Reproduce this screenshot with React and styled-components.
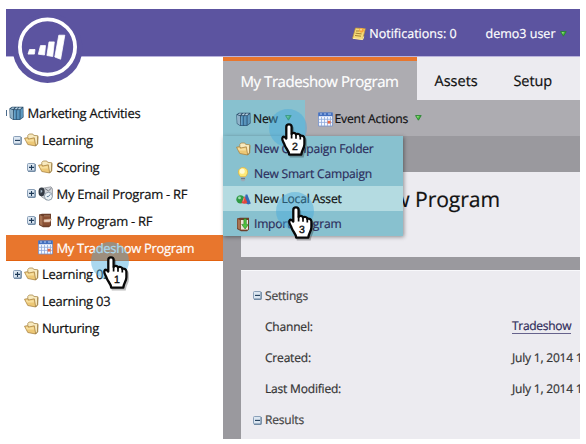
import React from "react";
import styled, { createGlobalStyle } from "styled-components";

const Global = createGlobalStyle`
  * { box-sizing: border-box; }
  body { margin: 0; background: #fff; font-family: "Open Sans", "Noto Sans", sans-serif; overflow: hidden; text-rendering: geometricPrecision; }
  svg { display: block; flex: none; }
`;

const Shell = styled.div`
  position: relative;
  width: 574px;
  height: 430px;
  margin: 9px 6px 5px;
  overflow: hidden;
  display: flex;
  flex-direction: column;
`;
const Header = styled.header`
  flex: none;
  height: 48px;
  padding: 2px 13.5px 0 0;
  background: #5c54a0;
  border-bottom: 1px solid #b9b3dc;
  display: flex;
  align-items: center;
  justify-content: flex-end;
  color: #fff;
`;
const Label = styled.span`
  font-size: ${(p) => p.$size || 13}px;
  letter-spacing: ${(p) => p.$track || 0}px;
  color: ${(p) => p.$color || "inherit"};
  line-height: 20px;
  white-space: nowrap;
  -webkit-text-stroke: 0.2px;
`;
const HeaderItem = styled.div`
  display: flex;
  align-items: center;
  gap: ${(p) => p.$gap || 3}px;
  margin-right: ${(p) => p.$after || 0}px;
`;
const Logo = styled.div`
  position: absolute;
  left: 6px;
  top: 3px;
`;
const Body = styled.div`
  flex: 1;
  display: flex;
  min-height: 0;
`;
const Tree = styled.nav`
  width: 217px;
  padding-top: 43.4px;
  overflow: hidden;
`;
const TreeRow = styled.div`
  height: 26.85px;
  display: flex;
  align-items: center;
  padding: 0 0 0 ${(p) => p.$indent}px;
  background: ${(p) => (p.$active ? "#e8762d" : "transparent")};
  border-bottom: 1px solid ${(p) => (p.$active ? "#e2620f" : "transparent")};
  color: ${(p) => (p.$active ? "#fff" : "#111")};
`;
const Toggle = styled.span`
  width: ${(p) => p.$width || 11}px;
  flex: none;
  display: flex;
`;
const Sliver = styled.span`
  width: 1px;
  height: 6px;
  margin-right: 2px;
  background: #4d6c8c;
`;
const IconSlot = styled.span`
  width: ${(p) => p.$width || 18}px;
  flex: none;
  display: flex;
`;
const Main = styled.main`
  width: 357px;
  display: flex;
  flex-direction: column;
  background: #9a999e;
`;
const Tabs = styled.div`
  flex: none;
  height: 43px;
  display: flex;
  background: #ecebf0;
`;
const Tab = styled.div`
  width: ${(p) => p.$width}px;
  padding: ${(p) => (p.$active ? "3px" : "7px")} 0 0 17.5px;
  display: flex;
  align-items: center;
  background: ${(p) => (p.$active ? "#adacb1" : "transparent")};
  border-top: ${(p) => (p.$active ? "4px solid #e8762d" : "none")};
  color: ${(p) => (p.$active ? "#fff" : "#111")};
`;
const Toolbar = styled.div`
  flex: none;
  height: 36px;
  display: flex;
  background: #adacb1;
  color: #111;
`;
const Tool = styled.div`
  width: ${(p) => p.$width}px;
  padding: 2px 0 0 13px;
  display: flex;
  align-items: center;
  background: ${(p) => (p.$open ? "#88c1cf" : "transparent")};
`;
const Drop = styled.span`
  margin-left: 7px;
  padding-bottom: 2px;
`;
const Content = styled.div`
  flex: 1;
  padding: 36px 0 0 18px;
  display: flex;
  flex-direction: column;
  gap: 13px;
`;
const TitlePanel = styled.section`
  height: 85px;
  padding-top: 13px;
  padding-right: 80px;
  display: flex;
  justify-content: flex-end;
  background: #ecebf0;
`;
const Title = styled.h1`
  margin: 0;
  font-size: 21.2px;
  line-height: 30px;
  font-weight: 400;
  letter-spacing: -0.1px;
  white-space: nowrap;
  color: #111;
  -webkit-text-stroke: 0.2px;
`;
const Details = styled.section`
  flex: 1;
  padding-top: 9px;
  background: #ecebf0;
  border-top: 1px solid #f8f8fb;
  overflow: hidden;
`;
const DetailRow = styled.div`
  height: 31.2px;
  display: flex;
  align-items: center;
  padding-left: 12px;
`;
const Name = styled.div`
  width: 247px;
  flex: none;
  display: flex;
`;
const Link = styled.a`
  font-size: 12px;
  line-height: 14px;
  color: #2c2958;
  border-bottom: 1px solid #66628c;
  letter-spacing: -0.3px;
  -webkit-text-stroke: 0.2px;
`;
const Menu = styled.div`
  position: absolute;
  left: 217px;
  top: 127px;
  width: 180px;
  background: #88c1cf;
  box-shadow: 1px 1px 4px rgba(0, 0, 0, 0.4);
`;
const MenuItem = styled.div`
  height: 25px;
  padding: 1px 0 0 13px;
  display: flex;
  align-items: center;
  color: ${(p) => (p.$hover ? "#111" : "#2c2d5c")};
  background: ${(p) => (p.$hover ? "#b4dbe1" : "transparent")};
`;
const Pointer = styled.div`
  position: absolute;
  left: ${(p) => p.$x}px;
  top: ${(p) => p.$y}px;
`;

const LogoMark = () => (
  <svg width="72" height="72" viewBox="0 0 72 72">
    <circle cx="35.5" cy="36" r="35" fill="#5c54a0" />
    <circle cx="35.5" cy="35" r="27.6" fill="none" stroke="#fff" strokeWidth="3.8" />
    <path d="M17.5 37.5h5.5l-.6 4.6h-6.4zM28.5 33.6h5L32.5 43l-6.2-.8zM37 29.9h5.3l-1.6 14.6-5.8-1zM46.8 23.2h6l-4.2 24-5.8-2.2z" fill="#fff" stroke="#fff" strokeWidth=".8" strokeLinejoin="round" />
  </svg>
);
const Box = ({ plus }) => (
  <svg width="9" height="9" viewBox="0 0 9 9">
    <rect x=".5" y=".5" width="7.5" height="7.5" rx="1" fill="#dbe6f1" stroke="#8ba0b8" />
    <path d="M8.2 1v7.3H1" fill="none" stroke="#557391" strokeWidth=".9" />
    <path d={plus ? "M2 4.4h5M4.5 2v5" : "M2 4.4h5"} stroke="#1e3a58" strokeWidth="1.1" />
  </svg>
);
const Folder = () => (
  <svg width="15" height="14" viewBox="0 0 15 14">
    <path d="M3.8 5V2.4L5.2 1h3.6l.9 1.4 4 .3-.3 8.3-2 2z" fill="#f8eabf" stroke="#a98a4c" strokeWidth=".8" strokeLinejoin="round" />
    <path d="M.5 5.2l3-.5 1 1.4 5.8-1.3 1.4 8.2-7.9-1.5z" fill="#edc876" stroke="#a98444" strokeWidth=".8" strokeLinejoin="round" />
    <path d="M1.8 6l1.4-.2 1 1.3 5.3-1.1.5 2.4-7.2.2z" fill="#f7df9f" />
    <path d="M11.7 13l2-2.2.3-7.5" fill="none" stroke="#98793c" strokeWidth=".8" />
  </svg>
);
const Books = () => (
  <svg width="15" height="15" viewBox="0 0 15 15">
    <path d="M.4 2.6L3 .8h11.4l.2 10.4L11 14H4.2L.8 11.8z" fill="#2c4f6c" />
    <path d="M.9 3.1l3.2.9.2 9.4-3-2z" fill="#8fb2c9" />
    <path d="M5 4h2.4v9.4H5z" fill="#4d8cb8" />
    <path d="M8.2 4h2.5v9.4H8.2z" fill="#4d8cb8" />
    <path d="M11.5 3.7l2.4-1.8v9.1l-2.4 1.9z" fill="#5f9ac0" />
    <path d="M1.8 2.6l1.6-1.2h2.2L4.2 3.1zM5.4 3.2l1.7-1.8h2.2L7.6 3.2zM8.6 3.2l1.7-1.8h2.6l-1.8 1.8z" fill="#b9d2e2" />
    <path d="M5.6 4.6v8.2M8.8 4.6v8.2" stroke="#8dbcd9" strokeWidth=".5" />
  </svg>
);
const Calendar = () => (
  <svg width="15" height="15" viewBox="0 0 15 15">
    <path d="M.5 1h14v13H.5z" fill="#f5f8ff" stroke="#7291ca" strokeWidth=".8" />
    <path d="M.3.5h14.4v3.7H.3z" fill="#4470bf" />
    <path d="M2 2h2m2 0h2m2 0h3" stroke="#b6cdf1" />
    <path d="M3.5 5v9m3-9v9m3-9v9m3-9v9M1 7.3h13M1 10.4h13" stroke="#8ea9dc" strokeWidth=".8" />
    <path d="M9.6 8.8h3v2.8h-3z" fill="#e86846" />
  </svg>
);
const Mail = () => (
  <svg width="15" height="15" viewBox="0 0 15 15">
    <path d="M3 2.5L13 .8l1.5 2v8l-6 3-5-3z" fill="#cfd3d9" stroke="#8b8e94" strokeWidth=".7" />
    <path d="M7 2.6l3.4 2.3L13.6 2" fill="none" stroke="#777b82" />
    <ellipse cx="3.6" cy="5.9" rx="3.1" ry="4.4" fill="#343b45" />
    <path d="M2.6 3.6l2 1.4-1.9 2.4z" fill="#a9bccb" />
    <circle cx="10.4" cy="10.3" r="4" fill="#edf3f7" stroke="#8d9ba8" />
    <path d="M10.3 10.6l2-2.2M10.3 10.6H8.8" stroke="#45698b" strokeWidth=".9" />
  </svg>
);
const Binder = ({ download }) => (
  <svg width="15" height="15" viewBox="0 0 15 15">
    <path d="M1 1.4L4 .8h9v11.7l-2 1.7H5l-4-2.3z" fill="#6d3f2a" />
    <path d="M1.6 2l3 1.2v9.9l-3-1.9z" fill="#a87353" />
    <path d="M5 3h7v9.6H5z" fill={download ? "#eee6da" : "#8a4f33"} />
    {download ? (
      <path d="M7.9 1.8h2.4v5.6h2.2l-3.4 4.6-3.4-4.6h2.2z" fill="#4fc43f" stroke="#267a28" strokeWidth=".6" />
    ) : (
      <path d="M6 6.8l7.5-.8-1.8 3H6zM6 2.8h6" fill="#ead2c2" stroke="#d2a78a" strokeWidth=".6" />
    )}
  </svg>
);
const Note = () => (
  <svg width="14" height="14" viewBox="0 0 14 14">
    <path d="M3.5 1l9.8.7-2.7 11L.6 11.3z" fill="#f5d978" stroke="#c69831" strokeWidth=".7" />
    <path d="M1 11.3l9.7 1.2 1-3" fill="none" stroke="#fff0af" />
    <path d="M4 4h3.5M3.6 6.2l6 .7M3 8.5l6 .7" stroke="#9c762a" strokeWidth=".9" />
    <circle cx="9.5" cy="3.3" r="2.4" fill="#f6a33a" />
    <circle cx="9" cy="2.7" r=".9" fill="#ffe3a2" />
  </svg>
);
const Bulb = () => (
  <svg width="15" height="15" viewBox="0 0 15 15">
    <path d="M4.7 9.7C.6 6.2 2.3.6 7 .6s6.4 5.6 2.3 9.1z" fill="#ffe978" stroke="#dfb440" strokeWidth=".8" />
    <ellipse cx="6.2" cy="4.2" rx="2.5" ry="2.6" fill="#fffbd5" />
    <path d="M4.8 9.9h4.4v3L8 14.2H6l-1.2-1.3z" fill="#9daab6" />
    <path d="M5 11.6h4" stroke="#5d6a74" strokeWidth=".8" />
  </svg>
);
const Shapes = () => (
  <svg width="15" height="15" viewBox="0 0 15 15">
    <path d="M9.6 2.4h1.8l3.4 9-2.6 1.2-4-2z" fill="#3268b6" />
    <circle cx="4.5" cy="7.4" r="4.2" fill="#2f9a45" />
    <circle cx="3.5" cy="5.9" r="1.4" fill="#a0deae" />
    <path d="M8.4 4l3 6.8c-1.4 1.4-4.4 1.4-5.8 0z" fill="#e2463d" />
    <path d="M8.2 5.6l-1.2 4" stroke="#f6a096" strokeWidth=".8" />
  </svg>
);
const Triangle = () => (
  <svg width="7" height="6" viewBox="0 0 7 6">
    <path d="M.6.6h5.6L3.4 5.2z" fill="#46b93e" stroke="#298333" strokeWidth=".9" strokeLinejoin="round" />
    <path d="M1.5 1.1h2.4L3 3.2z" fill="#8edb76" />
  </svg>
);
const handPath =
  "M17.3 18C17.3 14.6 22.6 14.6 22.6 18V25C23.5 23.2 26.6 23.5 27 25.5C28.4 24.3 31 24.9 31.3 26.9C33 26.1 35.4 27.3 35.4 29.6V35.3C35.4 39.3 32.6 41 32.3 45.6H20.2C19.9 41.6 16.8 39.6 15.6 35.8C14.9 33.4 12.7 31.6 13.3 29.2C14 26.8 16.3 27.8 17.3 29.6Z";
const Hand = ({ n }) => (
  <svg width="42" height="51" viewBox="0 0 42 51">
    <circle cx="19" cy="19" r="19" fill="#45abdc" fillOpacity=".46" />
    <path d={handPath} transform="translate(1.5 2)" fill="#000" stroke="#000" strokeWidth="2" opacity=".25" />
    <path d={handPath} fill="#fff" stroke="#080808" strokeWidth="2.3" strokeLinejoin="round" />
    <path d="M22.6 24.5v5M27 25.5v4.3M31.3 27v3.4" stroke="#080808" strokeWidth="1.7" />
    <text x="26" y="40.5" textAnchor="middle" fontFamily="Liberation Sans" fontSize="10.5" fill="#111" stroke="#111" strokeWidth=".4">{n}</text>
  </svg>
);

const tree = [
  { text: "Marketing Activities", icon: <Books />, indent: 0, sliver: true, track: -0.27 },
  { text: "Learning", icon: <Folder />, indent: 7, toggle: "minus", track: -0.25 },
  { text: "Scoring", icon: <Folder />, indent: 21, toggle: "plus", track: -0.27 },
  { text: "My Email Program - RF", icon: <Mail />, indent: 21, toggle: "plus", track: -0.26 },
  { text: "My Program - RF", icon: <Binder />, indent: 21, toggle: "plus", track: -0.27 },
  { text: "My Tradeshow Program", icon: <Calendar />, indent: 32, active: true, track: -0.34 },
  { text: "Learning 02", icon: <Folder />, indent: 7, toggle: "plus", track: -0.25 },
  { text: "Learning 03", icon: <Folder />, indent: 18, track: -0.25 },
  { text: "Nurturing", icon: <Folder />, indent: 18, track: -0.25 },
];
const menu = [
  { text: "New Campaign Folder", icon: <Folder /> },
  { text: "New Smart Campaign", icon: <Bulb /> },
  { text: "New Local Asset", icon: <Shapes />, hover: true },
  { text: "Import Program", icon: <Binder download /> },
];
const details = [
  { name: "Settings", section: true },
  { name: "Channel:", link: "Tradeshow" },
  { name: "Created:", value: "July 1, 2014 1" },
  { name: "Last Modified:", value: "July 1, 2014 1" },
  { name: "Results", section: true },
];

export default function App() {
  return (
    <>
      <Global />
      <Shell>
        <Header>
          <HeaderItem $after={29}><Note /><Label $size={12.5}>Notifications: 0</Label></HeaderItem>
          <HeaderItem $gap={4}><Label $size={12.5}>demo3 user</Label><Triangle /></HeaderItem>
        </Header>
        <Body>
          <Tree>
            {tree.map((r) => (
              <TreeRow key={r.text} $indent={r.indent} $active={r.active}>
                {r.sliver && <Sliver />}
                {r.toggle && <Toggle><Box plus={r.toggle === "plus"} /></Toggle>}
                <IconSlot $width={r.indent > 20 || r.sliver ? 18.5 : 18}>{r.icon}</IconSlot>
                <Label $track={r.track}>{r.text}</Label>
              </TreeRow>
            ))}
          </Tree>
          <Main>
            <Tabs>
              <Tab $width={194} $active><Label $size={15} $track={-0.44}>My Tradeshow Program</Label></Tab>
              <Tab $width={79}><Label $size={14.5}>Assets</Label></Tab>
              <Tab $width={80}><Label $size={14.5} $track={-0.1}>Setup</Label></Tab>
            </Tabs>
            <Toolbar>
              <Tool $width={82} $open>
                <IconSlot $width={17}><Books /></IconSlot>
                <Label $size={12.2} $track={-0.3}>New</Label>
                <Drop><Triangle /></Drop>
              </Tool>
              <Tool $width={140}>
                <IconSlot $width={16.5}><Calendar /></IconSlot>
                <Label $size={12.2} $track={-0.2}>Event Actions</Label>
                <Drop><Triangle /></Drop>
              </Tool>
            </Toolbar>
            <Content>
              <TitlePanel><Title>My Tradeshow Program</Title></TitlePanel>
              <Details>
                {details.map((d) => (
                  <DetailRow key={d.name}>
                    <Toggle $width={12}>{d.section && <Box />}</Toggle>
                    <Name><Label $size={12} $track={-0.19} $color={d.section ? "#444" : "#333"}>{d.name}</Label></Name>
                    {d.link && <Link>{d.link}</Link>}
                    {d.value && <Label $size={12} $track={-0.2} $color="#333">{d.value}</Label>}
                  </DetailRow>
                ))}
              </Details>
            </Content>
          </Main>
        </Body>
        <Logo><LogoMark /></Logo>
        <Menu>
          {menu.map((m) => (
            <MenuItem key={m.text} $hover={m.hover}>
              <IconSlot>{m.icon}</IconSlot>
              <Label $size={12.1} $track={-0.23}>{m.text}</Label>
            </MenuItem>
          ))}
        </Menu>
        <Pointer $x={85} $y={233}><Hand n="1" /></Pointer>
        <Pointer $x={263} $y={100}><Hand n="2" /></Pointer>
        <Pointer $x={270} $y={183}><Hand n="3" /></Pointer>
      </Shell>
    </>
  );
}
